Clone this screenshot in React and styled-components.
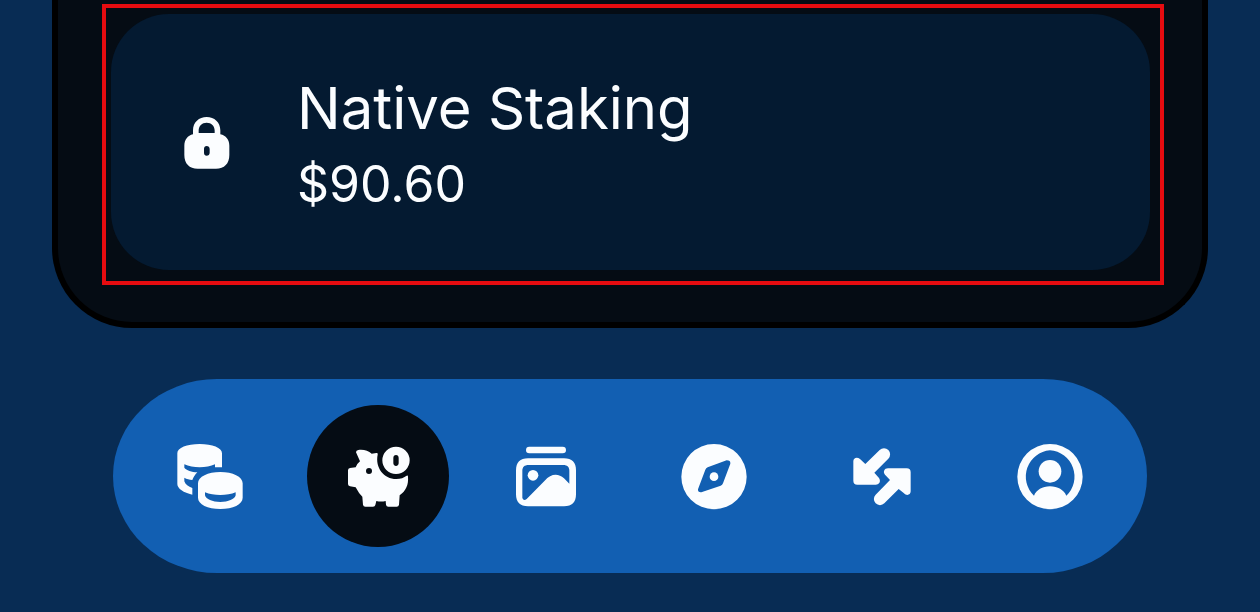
import React from 'react';
import styled, { createGlobalStyle } from 'styled-components';

const GlobalStyle = createGlobalStyle`
  * {
    box-sizing: border-box;
  }

  body {
    margin: 0;
    background: #082c54;
    color: #fbfdff;
    font-family: Inter, 'Liberation Sans', sans-serif;
  }
`;

const Screen = styled.main`
  padding: 0 52px;
`;

const Panel = styled.section`
  padding: 4px 38px 37px 44px;
  border: 6px solid #000;
  border-top: 0;
  border-radius: 0 0 80px 80px;
  background: #050c14;
`;

const Highlight = styled.div`
  padding: 6px 10px 11px 5px;
  border: 4px solid #e60c10;
`;

const Card = styled.article`
  display: flex;
  align-items: center;
  gap: 54px;
  padding: 50px 60px 48px;
  border-radius: 58px;
  background: #041a31;
`;

const Info = styled.div`
  padding-top: 6px;
`;

const Title = styled.h2`
  margin: 0;
  font-size: 58px;
  font-weight: 400;
  line-height: 76px;
`;

const Amount = styled.p`
  margin: 0;
  font-size: 50px;
  line-height: 76px;
`;

const Nav = styled.nav`
  display: flex;
  justify-content: space-between;
  margin: 51px 61px 38px;
  padding: 26px;
  border-radius: 104px / 97px;
  background: #125fb2;
`;

const Tab = styled.button`
  display: flex;
  align-items: center;
  justify-content: center;
  width: 142px;
  height: 142px;
  padding: 0;
  border: 0;
  border-radius: 50%;
  background: ${({ $active }) => ($active ? '#050c14' : 'transparent')};
  color: inherit;
  cursor: pointer;
`;

const Svg = styled.svg`
  flex: none;
  width: 72px;
  height: 72px;
  fill: currentColor;
`;

const LockIcon = () => (
  <Svg viewBox="3 6 216 216" aria-hidden="true">
    <path
      fillRule="evenodd"
      d="M69 88V76C69 52 87 36 110 36S151 52 151 76V88C168 92 178 104 178 122V150C178 176 163 191 138 191H83C58 191 43 176 43 150V122C43 104 53 92 69 88ZM86 84H134V77C134 62 124 53 110 53S86 62 86 77ZM110 123C105 123 102 127 102 132V143C102 148 105 152 110 152S119 148 119 143V132C119 127 115 123 110 123Z"
    />
  </Svg>
);

const CoinsIcon = () => (
  <Svg viewBox="27 30 216 216" aria-hidden="true">
    <path d="M37 70C37 53 66 42 104 42S171 53 171 70V112H150V103C125 115 83 115 58 103V113C64 121 80 126 97 127C90 134 85 142 82 150C73 149 65 147 58 143V154C61 164 70 170 82 174V194C56 188 37 176 37 162Z" />
    <path
      fillRule="evenodd"
      d="M99 160C99 140 129 126 166 126S233 140 233 160V203C233 223 204 237 166 237S99 223 99 203ZM120 187V196C123 208 142 216 166 216S209 208 212 196V187C187 198 145 198 120 187Z"
    />
  </Svg>
);

const PiggyIcon = () => (
  <Svg viewBox="126 120 216 216" aria-hidden="true">
    <path
      fillRule="evenodd"
      d="M168 157Q168 151 175 150C191 148 205 152 215 161L229 159Q235 158 233 164C225 202 251 237 289 237C302 237 312 233 320 227Q324 225 324 230C326 254 318 272 299 286L297 314Q296 320 290 320H265Q259 320 258 314L257 303Q243 306 229 303L226 315Q225 320 219 320H196Q190 320 189 314L187 290Q176 280 167 262L150 259Q144 258 144 252V211Q144 205 150 204L167 202Q172 190 180 184ZM207 204A9 9 0 1 0 207 222A9 9 0 1 0 207 204Z"
    />
    <path
      fillRule="evenodd"
      d="M288 140A41 41 0 1 1 288 222A41 41 0 1 1 288 140ZM288 165C283 165 280 169 280 174V189C280 194 283 198 288 198S296 194 296 189V174C296 169 293 165 288 165Z"
    />
  </Svg>
);

const GalleryIcon = () => (
  <Svg viewBox="30 30 216 216" aria-hidden="true">
    <rect x="78" y="50" width="120" height="20" rx="10" />
    <path
      fillRule="evenodd"
      d="M84 85H192C216 85 228 97 228 121V193C228 217 216 229 192 229H84C60 229 48 217 48 193V121C48 97 60 85 84 85ZM86 105C73 105 67 111 67 123V204Q71 214 80 207L134 152C153 130 175 129 192 145L208 161V123C208 111 202 105 190 105Z"
    />
    <circle cx="99" cy="136" r="16" />
  </Svg>
);

const CompassIcon = () => (
  <Svg viewBox="24 30 216 216" aria-hidden="true">
    <path
      fillRule="evenodd"
      d="M132 42A98 98 0 1 1 132 238A98 98 0 1 1 132 42ZM170 91L113 112Q108 114 106 119L84 178Q83 188 94 187L152 167Q157 165 159 160L181 101Q182 91 170 91Z"
    />
    <circle cx="132" cy="140" r="13" />
  </Svg>
);

const SwapIcon = () => (
  <Svg viewBox="24 30 216 216" aria-hidden="true">
    <path d="M125 60A18 18 0 0 1 151 86L109 128L123 144C129 153 125 164 113 164H58Q46 164 46 152V94C46 82 58 80 66 87L82 102Z" />
    <path d="M139 220A18 18 0 0 1 113 194L156 150L141 134C134 126 139 115 150 115H206Q218 115 218 127V184C218 196 205 198 198 190L182 177Z" />
  </Svg>
);

const ProfileIcon = () => (
  <Svg viewBox="27 30 216 216" aria-hidden="true">
    <path
      fillRule="evenodd"
      d="M135 42A98 98 0 1 1 135 238A98 98 0 1 1 135 42ZM135 61A79 79 0 0 0 87 197C94 180 112 169 135 169S177 180 184 197A79 79 0 0 0 135 61Z"
    />
    <circle cx="135" cy="124" r="34" />
  </Svg>
);

const tabs = [
  { label: 'Tokens', Icon: CoinsIcon },
  { label: 'Earn', Icon: PiggyIcon, active: true },
  { label: 'Collectibles', Icon: GalleryIcon },
  { label: 'Explore', Icon: CompassIcon },
  { label: 'Swap', Icon: SwapIcon },
  { label: 'Profile', Icon: ProfileIcon },
];

const App = () => (
  <>
    <GlobalStyle />
    <Screen>
      <Panel>
        <Highlight>
          <Card>
            <LockIcon />
            <Info>
              <Title>Native Staking</Title>
              <Amount>$90.60</Amount>
            </Info>
          </Card>
        </Highlight>
      </Panel>
      <Nav>
        {tabs.map(({ label, Icon, active }) => (
          <Tab
            key={label}
            type="button"
            aria-label={label}
            aria-current={active ? 'page' : undefined}
            $active={active}
          >
            <Icon />
          </Tab>
        ))}
      </Nav>
    </Screen>
  </>
);

export default App;
